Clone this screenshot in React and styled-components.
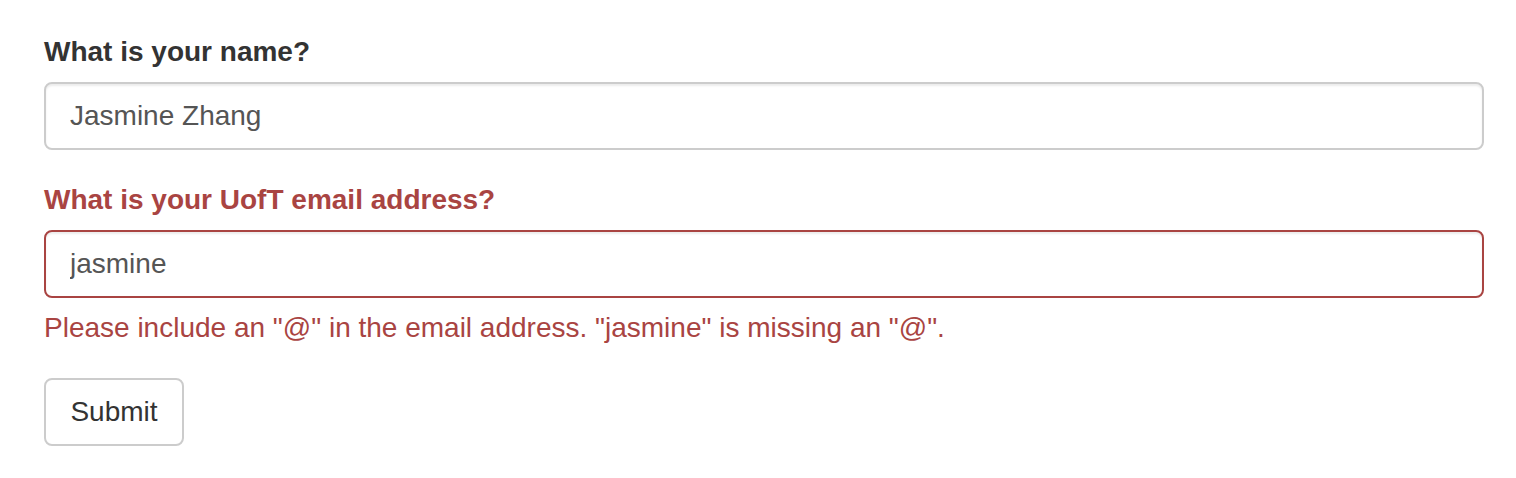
import React from 'react';
import styled, { createGlobalStyle } from 'styled-components';

const GlobalStyle = createGlobalStyle`
  html, body {
    margin: 0;
    padding: 0;
    background: #fff;
  }
  body {
    font-family: 'Liberation Sans', Arial, sans-serif;
    font-size: 28px;
    line-height: 40px;
    color: #333;
  }
`;

const Form = styled.form`
  width: 1440px;
  padding: 32px 0 0 44px;
`;

const Group = styled.div`
  margin-bottom: 30px;
  color: ${props => (props.error ? '#a94442' : '#333')};
`;

const Label = styled.label`
  display: block;
  font-weight: 700;
  margin-bottom: 10px;
  line-height: 40px;
`;

const Input = styled.input`
  display: block;
  box-sizing: border-box;
  width: 100%;
  height: 68px;
  padding: 12px 24px;
  font-family: inherit;
  font-size: 28px;
  line-height: 40px;
  color: #555;
  background: #fff;
  border: 2px solid ${props => (props.error ? '#a94442' : '#ccc')};
  border-radius: 8px;
  box-shadow: inset 0 2px 2px rgba(0, 0, 0, 0.075);
  outline: none;
  margin: 0;
`;

const Help = styled.p`
  margin: 10px 0 20px;
  line-height: 40px;
`;

const Button = styled.button`
  box-sizing: border-box;
  min-width: 140px;
  height: 68px;
  padding: 12px 24px;
  font-family: inherit;
  font-size: 28px;
  line-height: 40px;
  color: #333;
  background: #fff;
  border: 2px solid #ccc;
  border-radius: 8px;
  cursor: pointer;
`;

export default function App() {
  return (
    <>
      <GlobalStyle />
      <Form onSubmit={e => e.preventDefault()}>
        <Group>
          <Label htmlFor="name">What is your name?</Label>
          <Input id="name" type="text" defaultValue="Jasmine Zhang" />
        </Group>
        <Group error>
          <Label htmlFor="email">What is your UofT email address?</Label>
          <Input id="email" type="text" error defaultValue="jasmine" />
          <Help>Please include an "@" in the email address. "jasmine" is missing an "@".</Help>
        </Group>
        <Button type="submit">Submit</Button>
      </Form>
    </>
  );
}
